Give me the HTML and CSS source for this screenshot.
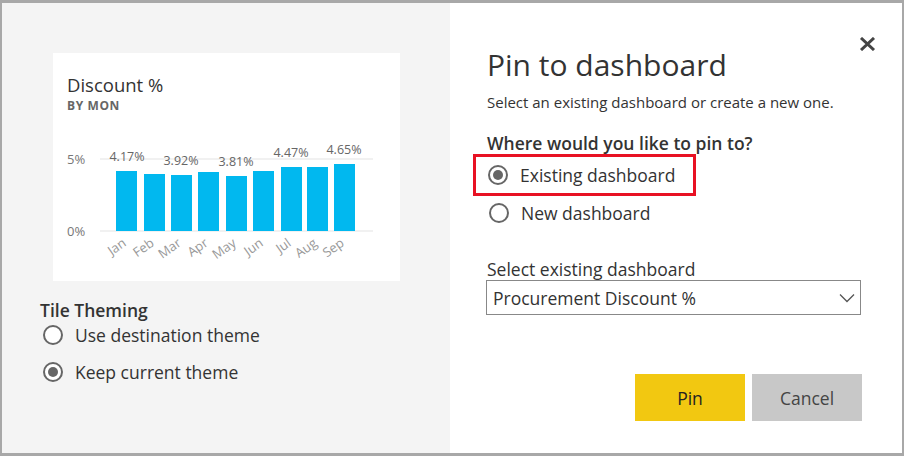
FILE: index.html
```html
<!DOCTYPE html>
<html>
<head>
<meta charset="utf-8">
<link rel="stylesheet" href="styles.css">
</head>
<body>
<div class="dialog">
  <div class="left">
    <div class="tile">
      <div class="tile-head">
        <div class="tile-title">Discount %</div>
        <div class="tile-sub">BY MON</div>
      </div>
      <svg class="chart" width="347" height="160" viewBox="0 0 347 160">
        <line x1="47" y1="39" x2="320" y2="39" stroke="#ececec" stroke-width="1.5"/>
        <line x1="47" y1="111" x2="320" y2="111" stroke="#ececec" stroke-width="1.5"/>
        <text class="axis" x="14" y="44">5%</text>
        <text class="axis" x="14" y="116">0%</text>
        <g fill="#01b8ef">
          <rect x="63" y="51" width="21" height="60"/>
          <rect x="91" y="54" width="21" height="57"/>
          <rect x="118" y="55" width="21" height="56"/>
          <rect x="145" y="52" width="21" height="59"/>
          <rect x="173" y="56" width="21" height="55"/>
          <rect x="200" y="51" width="21" height="60"/>
          <rect x="228" y="47" width="21" height="64"/>
          <rect x="254" y="47" width="21" height="64"/>
          <rect x="281" y="44" width="21" height="67"/>
        </g>
        <g class="val" text-anchor="middle">
          <text x="74" y="41">4.17%</text>
          <text x="128" y="45">3.92%</text>
          <text x="183" y="46">3.81%</text>
          <text x="238" y="37">4.47%</text>
          <text x="291" y="34">4.65%</text>
        </g>
        <g class="month" text-anchor="end">
          <text transform="translate(74 125) rotate(-35)">Jan</text>
          <text transform="translate(102 125) rotate(-35)">Feb</text>
          <text transform="translate(129 125) rotate(-35)">Mar</text>
          <text transform="translate(156 125) rotate(-35)">Apr</text>
          <text transform="translate(184 125) rotate(-35)">May</text>
          <text transform="translate(211 125) rotate(-35)">Jun</text>
          <text transform="translate(239 125) rotate(-35)">Jul</text>
          <text transform="translate(265 125) rotate(-35)">Aug</text>
          <text transform="translate(292 125) rotate(-35)">Sep</text>
        </g>
      </svg>
    </div>
    <div class="theming">
      <div class="theming-title">Tile Theming</div>
      <label class="radio"><span class="dot"></span><span>Use destination theme</span></label>
      <label class="radio checked"><span class="dot"></span><span>Keep current theme</span></label>
    </div>
  </div>
  <div class="right">
    <div class="head">
      <h1 class="title">Pin to dashboard</h1>
      <svg class="close" width="17" height="14" viewBox="0 0 17 14">
        <path d="M2 1 L15 13 M15 1 L2 13" stroke="#444" stroke-width="3" fill="none"/>
      </svg>
    </div>
    <p class="desc">Select an existing dashboard or create a new one.</p>
    <div class="question">Where would you like to pin to?</div>
    <div class="highlight">
      <label class="radio checked"><span class="dot"></span><span>Existing dashboard</span></label>
    </div>
    <label class="radio new"><span class="dot"></span><span>New dashboard</span></label>
    <div class="field-label">Select existing dashboard</div>
    <div class="select">
      <span>Procurement Discount %</span>
      <svg width="16" height="10" viewBox="0 0 16 10"><path d="M1 1.5 L8 8.5 L15 1.5" stroke="#555" stroke-width="1.3" fill="none"/></svg>
    </div>
    <div class="buttons">
      <button class="btn pin">Pin</button>
      <button class="btn cancel">Cancel</button>
    </div>
  </div>
</div>
</body>
</html>
```

FILE: styles.css
```css
* { box-sizing: border-box; }
html, body { margin: 0; padding: 0; background: #fff; }
body { font-family: "Open Sans", "Noto Sans", sans-serif; color: #333; }

.dialog {
  width: 904px;
  height: 456px;
  display: flex;
  border-top: 3px solid #a8a8a8;
  border-left: 2px solid #a8a8a8;
  border-right: 2px solid #a8a8a8;
  border-bottom: 3px solid #a8a8a8;
}

.left {
  width: 448px;
  background: #f4f4f4;
  padding: 50px 0 0 51px;
}

.tile {
  width: 347px;
  height: 228px;
  background: #fff;
  display: flex;
  flex-direction: column;
}
.tile-head { padding: 20px 0 0 14px; height: 67px; }
.tile-title { font-size: 18.5px; line-height: 24px; color: #333; }
.tile-sub { font-size: 12px; font-weight: 700; color: #666; letter-spacing: 0.6px; line-height: 14px; margin-top: 2px; }
.chart { display: block; }
.chart .axis { font-size: 13px; fill: #777; font-family: "Open Sans", sans-serif; }
.chart .val { font-size: 12.5px; fill: #666; font-family: "Open Sans", sans-serif; }
.chart .month { font-size: 13px; fill: #999; font-family: "Open Sans", sans-serif; }

.theming { margin: 18px 0 0 -13px; }
.theming-title { font-size: 17.5px; font-weight: 600; color: #333; line-height: 22px; }

.radio {
  display: flex;
  align-items: center;
  gap: 12px;
  font-size: 17.5px;
  color: #333;
  line-height: 22px;
}
.theming .radio { margin-top: 15px; margin-left: 3px; }
.theming .theming-title + .radio { margin-top: 3px; }
.dot {
  width: 20px;
  height: 20px;
  border: 2px solid #666;
  border-radius: 50%;
  background: #fff;
  flex: none;
  display: flex;
  align-items: center;
  justify-content: center;
}
.checked .dot::after {
  content: "";
  width: 10px;
  height: 10px;
  border-radius: 50%;
  background: #666;
}

.right {
  flex: 1;
  background: #fff;
  padding: 31px 26px 0 37px;
  display: flex;
  flex-direction: column;
}
.head { display: flex; justify-content: space-between; align-items: flex-start; }
.title { margin: 11px 0 0; font-size: 30px; font-weight: 400; line-height: 40px; color: #333; }
.close { margin-top: 3px; }
.desc { margin: 8px 0 0; font-size: 15px; line-height: 18px; color: #333; }
.question { margin-top: 21px; font-size: 17.5px; font-weight: 600; line-height: 22px; color: #333; }
.highlight {
  margin: 0 0 0 -14px;
  width: 223px;
  height: 42px;
  border: 3px solid #e81123;
  padding: 0 0 0 12px;
  display: flex;
  align-items: center;
}
.highlight .radio { margin: 0; }
.radio.new { margin-top: 6px; margin-left: 2px; }
.field-label { margin-top: 34px; font-size: 17.5px; line-height: 22px; color: #333; }
.select {
  margin: 0 0 0 -1px;
  width: 375px;
  height: 35px;
  border: 1.5px solid #888;
  display: flex;
  align-items: center;
  justify-content: space-between;
  padding: 0 5px 0 6px;
  font-size: 17.5px;
  color: #333;
}
.buttons { display: flex; justify-content: flex-end; gap: 7px; margin-top: 59px; padding-right: 14px; }
.btn {
  width: 110px;
  height: 47px;
  border: none;
  font-family: inherit;
  font-size: 17.5px;
  color: #333;
}
.pin { background: #f2c811; color: #222; }
.cancel { background: #c8c8c8; color: #444; }
```
